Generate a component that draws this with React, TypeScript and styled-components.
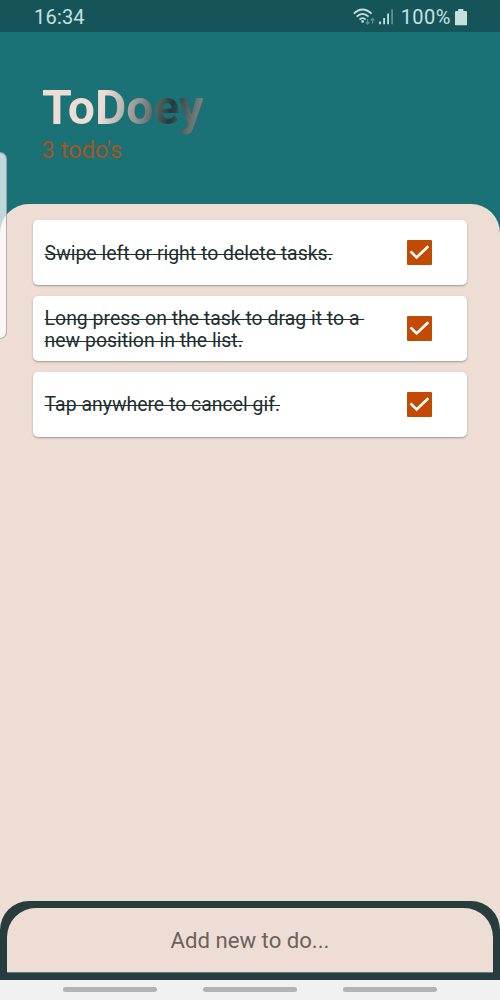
import React from "react";
import styled, { createGlobalStyle } from "styled-components";

const GlobalStyle = createGlobalStyle`
  * { box-sizing: border-box; }
  body { margin: 0; font-family: Roboto, sans-serif; }
`;

const Screen = styled.div`
  position: relative;
  display: flex;
  flex-direction: column;
  width: 500px;
  height: 1000px;
  overflow: hidden;
  background: #1a7277;
`;

const StatusBar = styled.header`
  display: flex;
  align-items: center;
  justify-content: space-between;
  height: 32px;
  flex: none;
  padding: 2px 33px 0 34px;
  background: #15555a;
  color: #c6e0e1;
  font-size: 20px;
  line-height: 30px;
`;

const Clock = styled.span`
  letter-spacing: 0.2px;
`;

const StatusIcons = styled.div`
  display: flex;
  align-items: center;
  svg { display: block; }
`;

const Percent = styled.span`
  margin: 0 4px 0 7px;
  letter-spacing: 0.5px;
`;

const Hero = styled.section`
  height: 172px;
  flex: none;
  padding: 48px 42px 0;
`;

const Title = styled.h1`
  width: max-content;
  margin: 0;
  font-size: 48.2px;
  line-height: 56px;
  font-weight: 700;
  color: transparent;
  background: linear-gradient(102deg, #eeddd5 38%, #8f918c 60%, #263c3d 78%, #263c3d 79%, #808580 96%);
  background-clip: text;
  -webkit-background-clip: text;
`;

const Count = styled.p`
  margin: 0 0 0 -0.5px;
  color: #a65420;
  font-size: 23.6px;
  line-height: 28px;
`;

const Sheet = styled.main`
  flex: 1;
  display: flex;
  flex-direction: column;
  background: #eeddd5;
  border-radius: 29px 29px 0 0;
`;

const TaskList = styled.ul`
  flex: 1;
  display: flex;
  flex-direction: column;
  gap: 11px;
  margin: 0;
  padding: 16.4px 33px 0;
  list-style: none;
`;

const TaskCard = styled.li`
  display: flex;
  align-items: center;
  justify-content: space-between;
  height: 64.8px;
  padding: 0 35.2px 0 11.6px;
  border-radius: 5px;
  background: #fff;
  box-shadow: 0 1px 2px rgba(70, 60, 55, 0.45);
`;

const TaskText = styled.span`
  padding-top: 2.2px;
  color: #1d2f2f;
  font-size: 19.43px;
  line-height: 22px;
  white-space: pre;
  text-decoration: line-through;
  text-decoration-thickness: 1px;
`;

const Checkbox = styled.span`
  display: grid;
  place-items: center;
  width: 25px;
  height: 25px;
  border-radius: 1px;
  background: #c24a02;
`;

const AddFrame = styled.footer`
  height: 79px;
  flex: none;
  padding: 7px 7px 7px;
  background: #263c3d;
  border-radius: 29px 29px 0 0;
`;

const AddButton = styled.button`
  display: block;
  width: 100%;
  height: 65px;
  padding: 0;
  border: 0;
  border-bottom: 1px solid #568083;
  border-radius: 29px 29px 0 0;
  background: #eeddd5;
  color: #6b625b;
  font: 400 22.15px/64px Roboto, sans-serif;
`;

const NavBar = styled.nav`
  display: flex;
  justify-content: center;
  gap: 46px;
  height: 20px;
  flex: none;
  padding-top: 7px;
  background: #f1f1f1;
`;

const NavPill = styled.span`
  width: 94px;
  height: 5px;
  border-radius: 3px;
  background: #b3b3b3;
`;

const EdgeHandle = styled.div`
  position: absolute;
  left: -10.5px;
  top: 152px;
  width: 17px;
  height: 187px;
  border: 1px solid rgba(120, 120, 120, 0.55);
  border-radius: 7px;
  background: rgba(255, 255, 255, 0.72);
`;

const tasks = [
  "Swipe left or right to delete tasks.",
  "Long press on the task to drag it to a\u00a0\nnew position in the list.",
  "Tap anywhere to cancel gif.",
];

const Wifi = () => (
  <svg width="25" height="18" viewBox="0 0 25 18" fill="none" stroke="#c6e0e1" strokeWidth="1.8">
    <path d="M.8 5.6Q9.5-2.6 18.6 5.6M3.6 8.7Q9.5 3.1 15.6 8.7M6.5 11.5Q9.5 8.7 12.7 11.5" />
    <circle cx="9.6" cy="13.4" r="1.3" fill="#c6e0e1" stroke="none" />
    <path d="M14.6 11V16M12.8 14l1.8 2 1.8-2M19.6 15.5v-5M17.8 12.5l1.8-2 1.8 2" stroke="#5c9193" strokeWidth="1.2" />
  </svg>
);

const Signal = () => (
  <svg width="16" height="18" viewBox="0 0 16 18" fill="#c6e0e1">
    <path d="M1.2 13.5h1.8v2.7H1.2zM5.2 10h1.8v6.2H5.2zM9.2 5.5h1.8v10.7H9.2z" />
    <path d="M13.2 1.5h1.8v14.7h-1.8z" fill="#5c9193" />
  </svg>
);

const Battery = () => (
  <svg width="12" height="17" viewBox="0 0 12 17" fill="#c6e0e1">
    <path d="M3.2 0h5.2v2H11q1 0 1 1v12.5q0 .7-.8.7H.8q-.8 0-.8-.7V3q0-1 1-1h2.2z" />
  </svg>
);

const Check = () => (
  <svg width="25" height="25" viewBox="0 0 25 25" fill="none" stroke="#fff" strokeWidth="2.6">
    <path d="M3.5 11.4 9.6 17.4 21.3 6.2" />
  </svg>
);

export default function App() {
  return (
    <Screen>
      <GlobalStyle />
      <StatusBar>
        <Clock>16:34</Clock>
        <StatusIcons>
          <Wifi />
          <Signal />
          <Percent>100%</Percent>
          <Battery />
        </StatusIcons>
      </StatusBar>
      <Hero>
        <Title>ToDoey</Title>
        <Count>3 todo's</Count>
      </Hero>
      <Sheet>
        <TaskList>
          {tasks.map((task) => (
            <TaskCard key={task}>
              <TaskText>{task}</TaskText>
              <Checkbox role="checkbox" aria-checked="true">
                <Check />
              </Checkbox>
            </TaskCard>
          ))}
        </TaskList>
        <AddFrame>
          <AddButton>Add new to do...</AddButton>
        </AddFrame>
      </Sheet>
      <NavBar>
        <NavPill />
        <NavPill />
        <NavPill />
      </NavBar>
      <EdgeHandle />
    </Screen>
  );
}
